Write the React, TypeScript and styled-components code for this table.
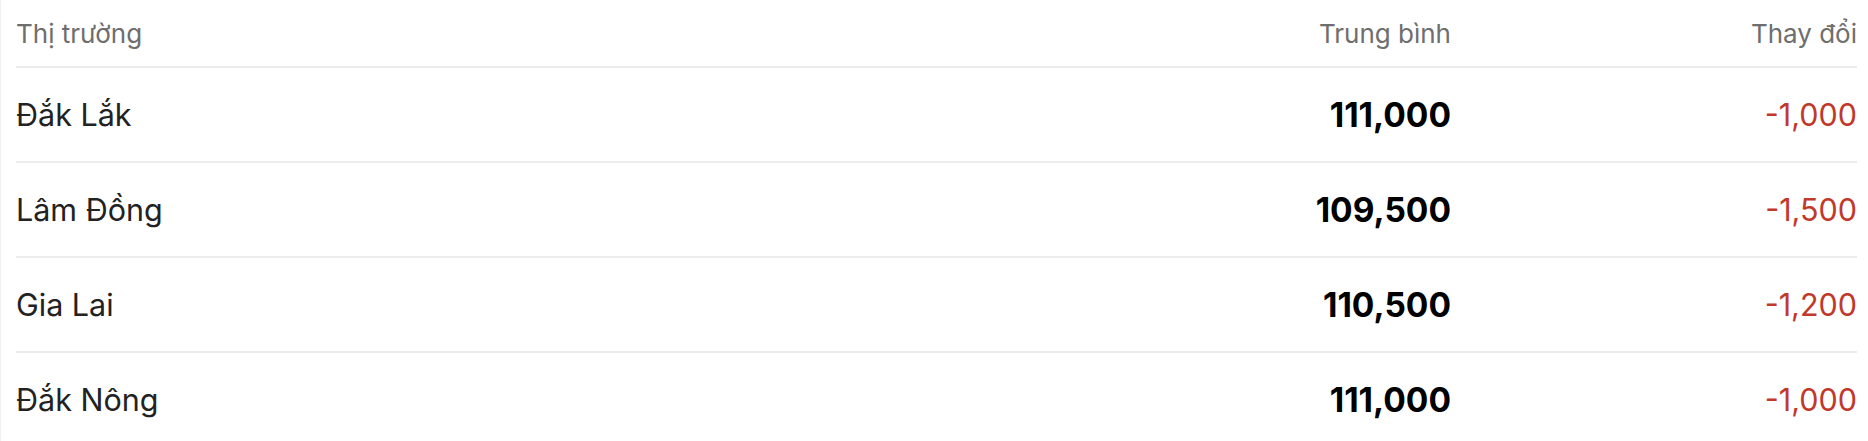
import React from "react";
import styled, { createGlobalStyle } from "styled-components";

const GlobalStyle = createGlobalStyle`
  body {
    margin: 0;
    background: #fff;
    font-family: Inter, "Noto Sans", sans-serif;
  }
`;

const prices = [
  { id: 1, market: "Đắk Lắk", average: "111,000", change: "-1,000" },
  { id: 2, market: "Lâm Đồng", average: "109,500", change: "-1,500" },
  { id: 3, market: "Gia Lai", average: "110,500", change: "-1,200" },
  { id: 4, market: "Đắk Nông", average: "111,000", change: "-1,000" },
];

const Table = styled.div`
  width: 1868px;
  box-sizing: border-box;
  padding: 0 11px 0 15px;
  border-left: 1px solid #f1f1f1;
`;

const Row = styled.div<{ $head?: boolean; $last?: boolean }>`
  display: grid;
  grid-template-columns: 1fr 420px 406px;
  align-items: center;
  height: ${({ $head }) => ($head ? "66px" : "93px")};
  border-bottom: ${({ $last }) => ($last ? "none" : "2px solid #ececec")};
`;

const HeadCell = styled.div<{ $right?: boolean }>`
  font-size: 26px;
  color: #6e6e6e;
  text-align: ${({ $right }) => ($right ? "right" : "left")};
`;

const Market = styled.div`
  font-size: 30.5px;
  color: #222;
`;

const Average = styled.div`
  font-size: 33.5px;
  font-weight: 700;
  color: #000;
  text-align: right;
`;

const Change = styled.div<{ $down?: boolean }>`
  font-size: 30.5px;
  color: ${({ $down }) => ($down ? "#c0392b" : "#1e9e4a")};
  text-align: right;
`;

export default function App() {
  return (
    <>
      <GlobalStyle />
      <Table>
        <Row $head>
          <HeadCell>Thị trường</HeadCell>
          <HeadCell $right>Trung bình</HeadCell>
          <HeadCell $right>Thay đổi</HeadCell>
        </Row>
        {prices.map((p, idx) => (
          <Row key={p.id} $last={idx === prices.length - 1}>
            <Market>{p.market}</Market>
            <Average>{p.average}</Average>
            <Change $down={p.change.startsWith("-")}>{p.change}</Change>
          </Row>
        ))}
      </Table>
    </>
  );
}
